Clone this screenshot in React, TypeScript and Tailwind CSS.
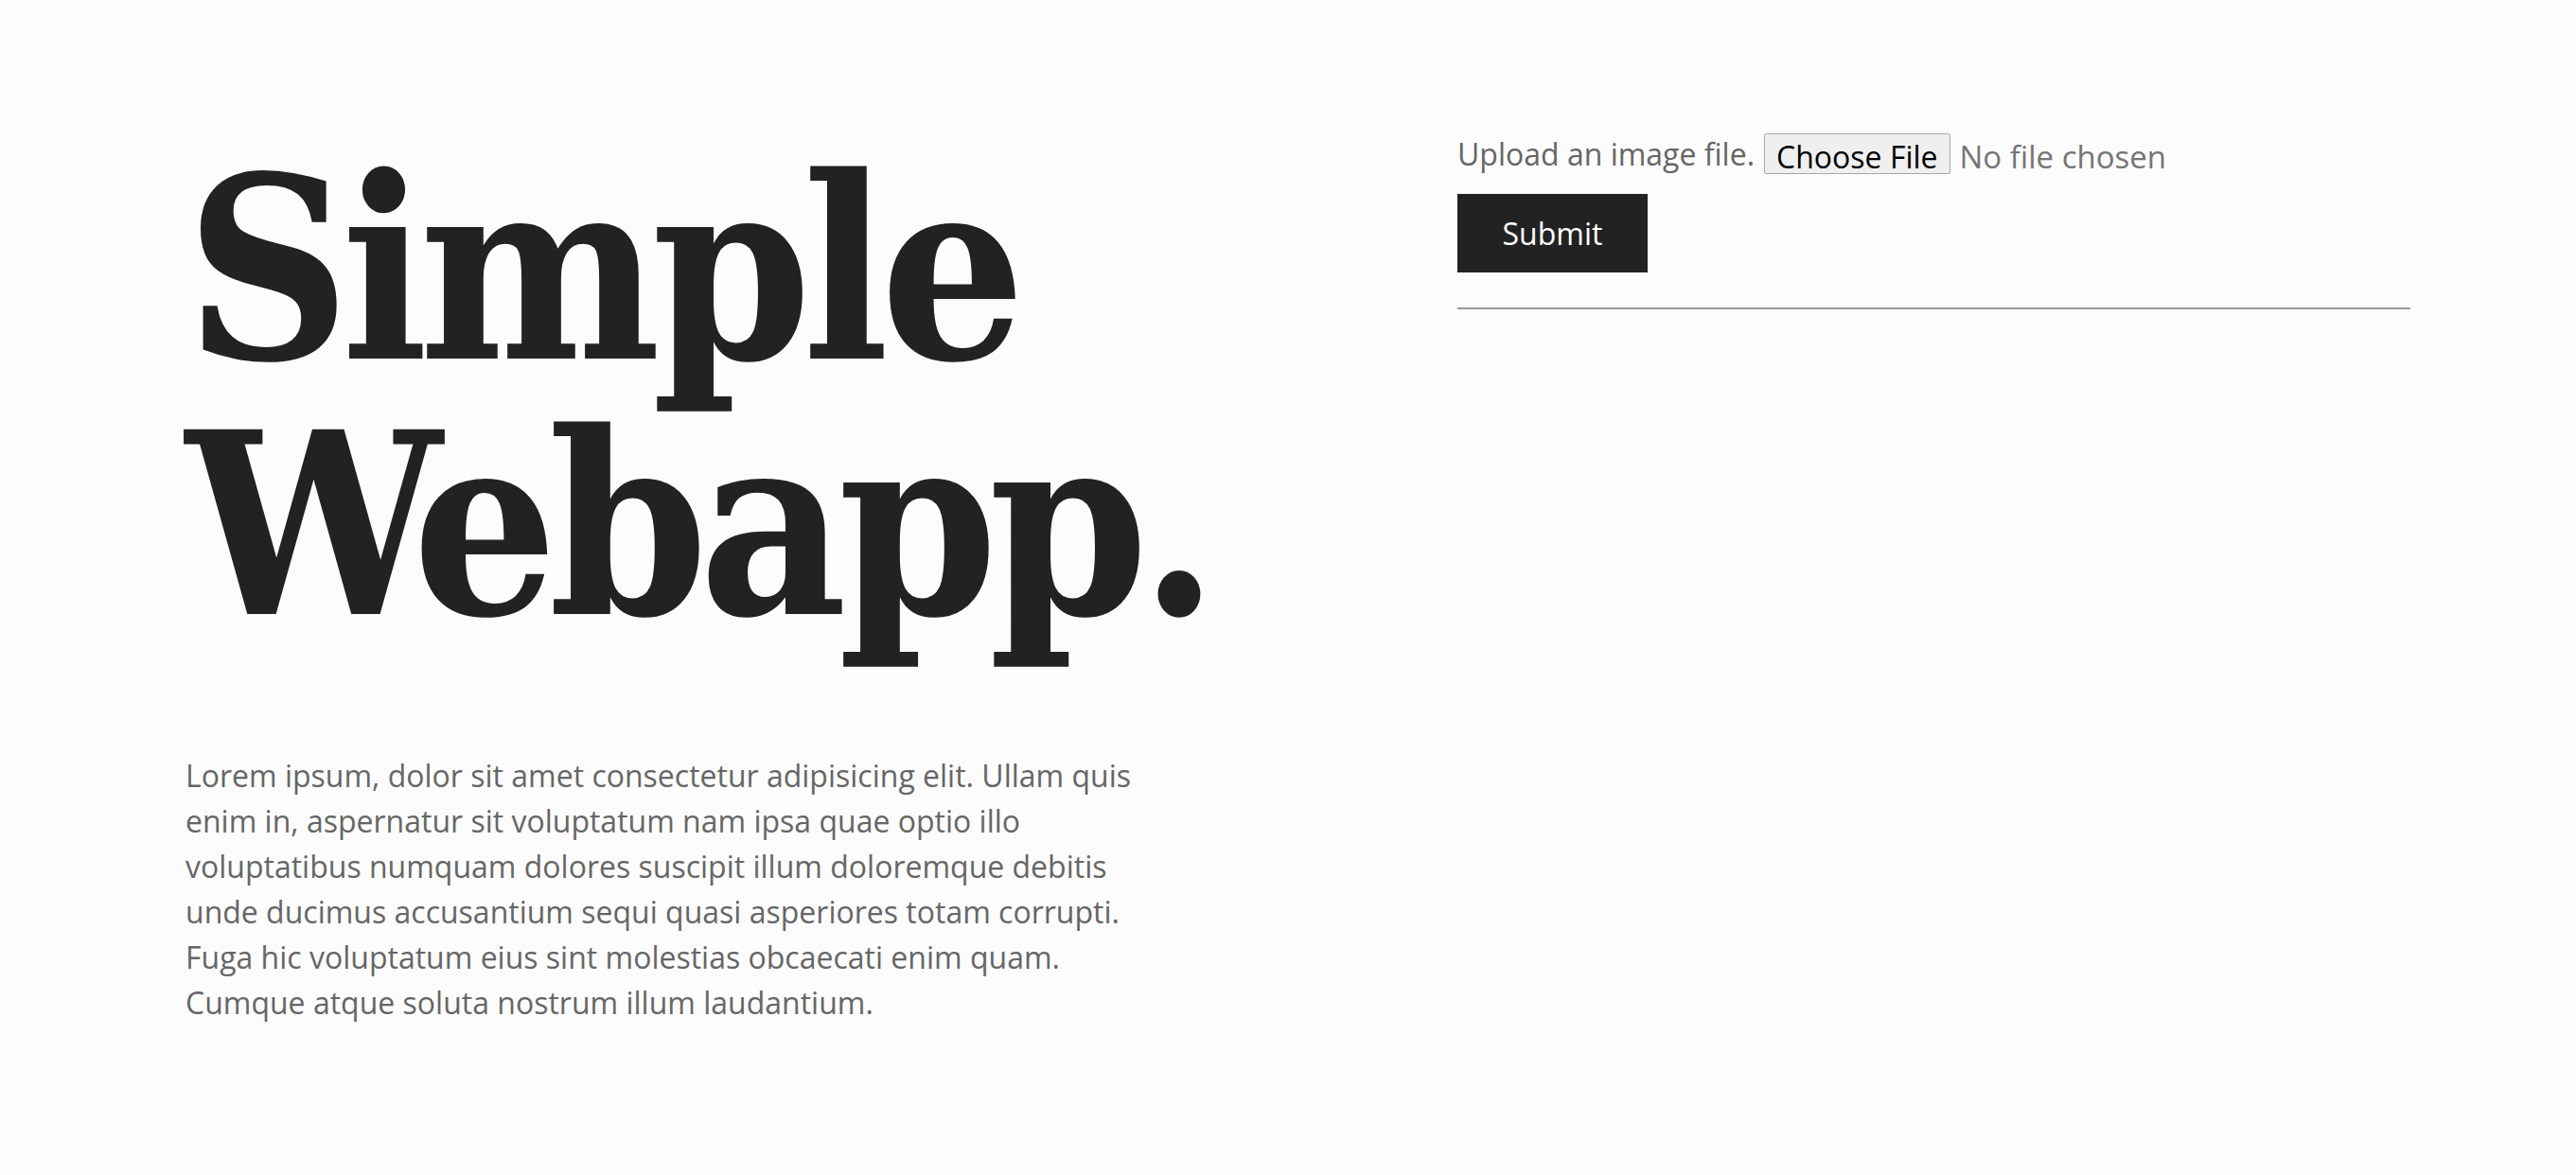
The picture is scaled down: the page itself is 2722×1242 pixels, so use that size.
export default function App() {
  return (
    <div className="min-h-[1242px] w-full bg-[#fcfcfc] font-['Open_Sans','Noto_Sans',sans-serif]">
      <div className="grid grid-cols-[1007px_1007px] gap-x-[337px] pl-[196px]">
        {/* left: title and blurb */}
        <div>
          <h1 className="mt-[150px] text-[268px] leading-[270px] font-bold tracking-[-0.035em] text-[#222222] font-['DejaVu_Serif_Condensed','DejaVu_Serif',serif]">
            Simple
            <br />
            Webapp.
          </h1>
          <p className="mt-[106px] w-[1010px] text-[32px] leading-[48px] text-[#666666]">
            Lorem ipsum, dolor sit amet consectetur adipisicing elit. Ullam quis enim in, aspernatur sit
            voluptatum nam ipsa quae optio illo voluptatibus numquam dolores suscipit illum doloremque
            debitis unde ducimus accusantium sequi quasi asperiores totam corrupti. Fuga hic voluptatum
            eius sint molestias obcaecati enim quam. Cumque atque soluta nostrum illum laudantium.
          </p>
        </div>

        {/* right: upload form */}
        <form className="pt-[141px]" onSubmit={(e) => e.preventDefault()}>
          <div className="flex h-[43px] items-center">
            <label htmlFor="file" className="text-[32px] text-[#666666]">
              Upload an image file.
            </label>
            <input
              id="file"
              type="file"
              accept="image/*"
              className="ml-[10px] h-[43px] text-[33px] text-[#757575] file:mr-[10px] file:h-[43px] file:rounded-[2px] file:border file:border-solid file:border-[#a9a9a9] file:bg-[#efefef] file:px-[12px] file:py-0 file:text-[32px] file:text-black"
            />
          </div>
          <button
            type="submit"
            className="mt-[21px] h-[83px] w-[201px] bg-[#222222] text-[32px] text-white"
          >
            Submit
          </button>
          <hr className="mt-[37px] w-[1007px] border-0 border-t-2 border-[#9a9a9a]" />
        </form>
      </div>
    </div>
  )
}
